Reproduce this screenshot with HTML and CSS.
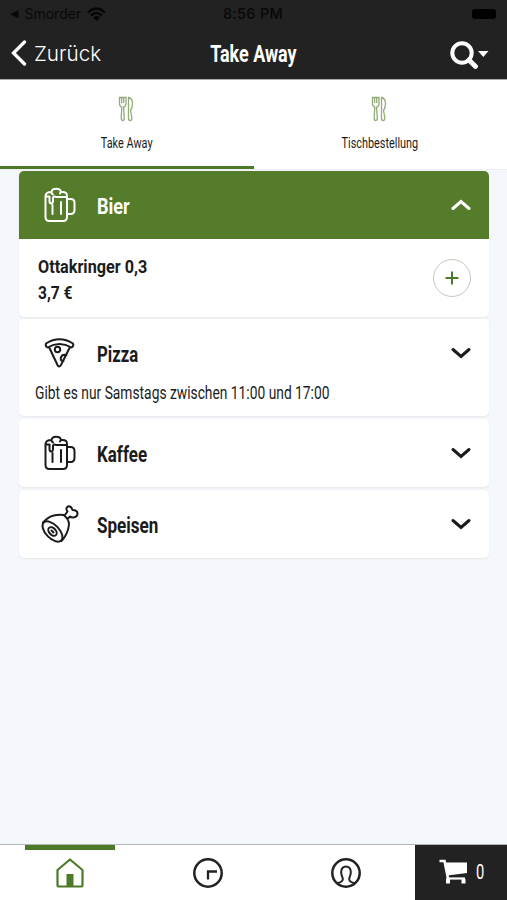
FILE: index.html
```
<!DOCTYPE html>
<html lang="de">
<head>
<meta charset="utf-8">
<title>Take Away</title>
<link rel="stylesheet" href="styles.css">
</head>
<body>
<svg class="defs" width="0" height="0">
  <symbol id="cutlery" viewBox="0 0 16 26">
    <path d="M1.5 1.5v6q0 3 2.3 3.6L3.2 22q0 2.5 1.5 2.5T6.300 22L5.500 11.100Q8 10.500 8 7.500v-6zM3.600 2v5M5.700 2v5M10.500 1.500v21q0 2 1.700 2t1.700-2.500L12.500 14.500Q14.500 12 14.500 7.500q0-5-4-6z"/>
  </symbol>
  <symbol id="beer" viewBox="0 0 32 36">
    <path d="M1.500 9V30Q1.500 34 5.500 34H19Q23 34 23 30V9.500M1.500 10Q1 5 7.500 5C8 .5 16.500 .5 17 5C22 4.500 23.500 6.500 23 10H12M2 9.500H5.500V14q0 2.500 1.700 2.500T9 14V11q0-1.500 2-1.500M8.500 18v9M17 15v12M23 12h3.500q4 0 4 4v7q0 4-4 4H23M7.500 5q0 2 1.500 2.500M17 5l-1 1.500"/>
  </symbol>
  <symbol id="chevron" viewBox="0 0 20 12"><path d="M2 2.500 10 9.500 18 2.500"/></symbol>
</svg>
<header>
  <div class="status">
    <div class="carrier"><span class="back-app">◀</span><span>Smorder</span>
      <svg width="19" height="14" viewBox="0 0 19 14"><path d="M1 5.500q8.500-8 17 0M4 8.500q5.500-5 11 0" fill="none" stroke="#060606" stroke-width="2.400"/><path d="M6 10.500q3.500-3 7 0L9.500 14z" fill="#060606"/></svg>
    </div>
    <div class="time">8:56 PM</div>
    <i class="battery"></i>
  </div>
  <div class="nav">
    <div class="back"><svg width="16" height="26" viewBox="0 0 16 26"><path d="M13.500 2 2.500 13l11 11" fill="none" stroke="#fff" stroke-width="3.300" stroke-linecap="round"/></svg><span>Zurück</span></div>
    <h1><span class="narrow title">Take Away</span></h1>
    <svg class="search" width="40" height="28" viewBox="0 0 40 28"><circle cx="12" cy="12" r="9.700" fill="none" stroke="#fff" stroke-width="4"/><path d="m19 19 6.500 6.500" stroke="#fff" stroke-width="4.800" stroke-linecap="round"/><path d="M28 10h10.500l-5.200 6z" fill="#fff"/></svg>
  </div>
</header>
<nav class="tabs">
  <div class="tab active"><svg class="cutlery" width="16" height="26"><use href="#cutlery"/></svg><span class="narrow tab-a">Take Away</span></div>
  <div class="tab"><svg class="cutlery" width="16" height="26"><use href="#cutlery"/></svg><span class="narrow tab-b">Tischbestellung</span></div>
</nav>
<main>
  <section class="card open">
    <div class="row"><svg class="icon" width="32" height="36"><use href="#beer"/></svg><h2 class="narrow bier">Bier</h2><svg class="chevron up" width="20" height="12"><use href="#chevron"/></svg></div>
    <div class="item">
      <div class="item-text"><span class="narrow product">Ottakringer 0,3</span><span class="narrow price">3,7 €</span></div>
      <div class="add"><svg width="14" height="14" viewBox="0 0 14 14"><path d="M7 .5v13M.5 7h13" stroke="#4d7a29" stroke-width="2"/></svg></div>
    </div>
  </section>
  <section class="card pizza-card">
    <div class="row"><svg class="icon" width="32" height="32" viewBox="0 0 32 32"><path d="M3.500 10.500Q1 9 2 6.500Q15.500-2 29 6.500Q30 9 27.500 10.500Q15.500 3.500 3.500 10.500zM5 10l8.500 18q1.500 3 3.500 0L26 10M22.500 18q-4.500-1-5.500 2.500T19.500 24"/><circle cx="13.500" cy="12.500" r="2.700"/></svg><h2 class="narrow pizza">Pizza</h2><svg class="chevron" width="20" height="12"><use href="#chevron"/></svg></div>
    <p><span class="narrow note">Gibt es nur Samstags zwischen 11:00 und 17:00</span></p>
  </section>
  <section class="card">
    <div class="row"><svg class="icon" width="32" height="36"><use href="#beer"/></svg><h2 class="narrow kaffee">Kaffee</h2><svg class="chevron" width="20" height="12"><use href="#chevron"/></svg></div>
  </section>
  <section class="card">
    <div class="row"><svg class="icon leg" width="38" height="38" viewBox="0 0 38 38"><path d="M2 17.500C7 11.500 15 9 22.500 10Q28 14 28 19.500Q27 29 20.500 36M23.500 10.500l3-4Q24 3 27 1.500q3-1 4.500 3.500Q36.500 5 36.500 8.500T32 12.500q-2 0-3-1L26.500 14"/><ellipse cx="11.500" cy="26.500" rx="6.700" ry="12.500" transform="rotate(-44 11.500 26.500)"/><ellipse cx="11.500" cy="26.500" rx="3.300" ry="5" transform="rotate(-44 11.500 26.500)"/><path d="m10.500 25.500 2 2"/></svg><h2 class="narrow speisen">Speisen</h2><svg class="chevron" width="20" height="12"><use href="#chevron"/></svg></div>
  </section>
</main>
<footer>
  <div class="dock home"><svg width="28" height="30" viewBox="0 0 28 30"><path d="M1.500 12 14 1.500 26.500 12v15q0 1.500-1.500 1.500H3q-1.500 0-1.500-1.500z" fill="none" stroke="#4d7a29" stroke-width="2.200" stroke-linejoin="round"/><path d="M10.500 16h7v12h-7z" fill="#4d7a29" stroke="none"/></svg></div>
  <div class="dock"><svg width="32" height="32" viewBox="0 0 32 32"><circle cx="16" cy="16" r="13.700"/><path d="M25 14.500H16v8" stroke-width="2.300"/></svg></div>
  <div class="dock"><svg width="32" height="32" viewBox="0 0 32 32"><circle cx="16" cy="16" r="13.700"/><path d="M7.500 26q5-1 5.300-3.500C13 20 11 19 11.200 15C11 7.500 21 7.500 20.800 15C21 19 19 20 19.200 22.500Q19.500 25 24.500 26" stroke-width="2"/></svg></div>
  <div class="cart"><svg width="30" height="26" viewBox="0 0 30 26"><path d="M.5 2H5.500L9 19.500" fill="none" stroke="#fff" stroke-width="2.600"/><path d="M6 3.500H28V14L8.500 16.500z" fill="#fff"/><path d="M7.500 19.500h18.500" stroke="#fff" stroke-width="2.200"/><path d="M7 20h4v4.500H7zM22.500 20h4v4.500h-4z" fill="#fff"/></svg><span class="narrow count">0</span></div>
</footer>
</body>
</html>
```
FILE: styles.css
```
* { box-sizing: border-box; }
body {
  margin: 0;
  height: 900px;
  display: flex;
  flex-direction: column;
  overflow: hidden;
  background: #f4f7fb;
  color: #1b1b1b;
  font-family: Roboto, "Liberation Sans", sans-serif;
}
h1, h2, p { margin: 0; }
svg { display: block; flex: none; }
.defs { position: absolute; }
.narrow { display: inline-block; white-space: nowrap; transform-origin: left center; }

header { height: 79px; background: #222; }
.status {
  height: 27px;
  padding: 0 11px 0 10px;
  display: grid;
  grid-template-columns: 1fr auto 1fr;
  align-items: center;
  color: #080808;
  font: 14px Inter, sans-serif;
}
.carrier { display: flex; align-items: center; gap: 6px; }
.back-app { font: 11px "DejaVu Sans", sans-serif; }
.time { font-weight: 500; font-size: 14.5px; letter-spacing: .3px; }
.battery { justify-self: end; width: 24px; height: 10px; border-radius: 3px; background: #000; }
.nav {
  height: 52px;
  padding: 0 17px 0 11px;
  display: grid;
  grid-template-columns: 1fr auto 1fr;
  align-items: center;
  color: #fff;
}
.back { display: flex; align-items: center; gap: 7px; font: 300 20.7px Inter, sans-serif; }
.nav h1 { font-size: 23px; line-height: 30px; padding: 3px 0 0 6px; }
.search { justify-self: end; margin-top: 3px; }

.tabs { height: 91px; display: flex; background: #fff; border-top: 1px solid #aaa; border-bottom: 1px solid #eee; }
.tab {
  flex: 1;
  padding-top: 16px;
  display: flex;
  flex-direction: column;
  align-items: center;
  gap: 11px;
  font-size: 15px;
  line-height: 20px;
  border-bottom: 3px solid transparent;
}
.tab.active { border-color: #4d7a29; }
.tab .narrow, h1 .narrow { transform-origin: center; }
.cutlery { fill: none; stroke: #91ac78; stroke-width: 1.3; margin-right: 2px; }

main { flex: 1; padding: 1px 18px 0 19px; }
.card { background: #fff; border-radius: 5px; margin-bottom: 3px; box-shadow: 0 1px 2px #e6e8ea; }
.card.open { margin-bottom: 2px; overflow: hidden; }
.row { height: 68px; padding: 0 18px 0 25px; display: flex; align-items: center; }
.row h2 { margin-left: 21px; font-size: 22px; line-height: 30px; padding-top: 3px; }
.open .row { background: #557c2b; color: #fff; }
.icon { fill: none; stroke: currentColor; stroke-width: 2; stroke-linecap: round; stroke-linejoin: round; }
.leg { margin: 0 -3px; }
.chevron { margin-left: auto; fill: none; stroke: currentColor; stroke-width: 3; stroke-linecap: round; }
.up { transform: rotate(180deg); }
.item { height: 78px; padding: 3px 18px 0 19px; display: flex; align-items: center; justify-content: space-between; }
.item-text { display: flex; flex-direction: column; font-size: 18.5px; line-height: 26px; font-weight: 700; }
.add { width: 38px; height: 38px; margin-top: -3px; border: 1px solid #c4cabc; border-radius: 50%; display: grid; place-items: center; }
.pizza-card { height: 97px; }
.pizza-card p { padding-left: 16px; margin-top: -6px; font-size: 18px; line-height: 24px; }

.title { transform: scaleX(.78); }
.tab-a { transform: scaleX(.725); }
.tab-b { transform: scaleX(.725); }
.bier { transform: scaleX(.82); }
.product { transform: scaleX(.875); }
.price { transform: scaleX(.84); }
.pizza { transform: scaleX(.76); }
.note { transform: scaleX(.767); }
.kaffee { transform: scaleX(.77); }
.speisen { transform: scaleX(.775); }

footer { height: 55px; display: grid; grid-template-columns: 139px 138px 138px 92px; background: #fff; box-shadow: 0 -1px #b3b5b8; }
.dock { display: grid; place-items: center; fill: none; stroke: #222; stroke-width: 2.5; }
.home { padding-left: 1px; background: linear-gradient(#4d7a29, #4d7a29) 25px 0 / 90px 5px no-repeat; }
.cart { background: #222; color: #fff; display: flex; align-items: center; gap: 7px; padding: 0 0 1px 24px; font-size: 21px; }
.count { transform: scaleX(.7); }
```
